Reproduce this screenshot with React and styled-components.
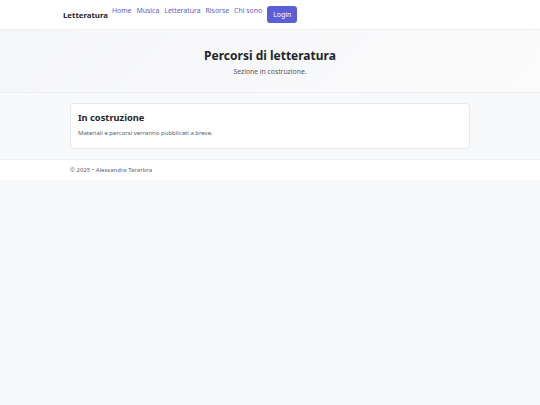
import React from 'react';
import styled, { createGlobalStyle } from 'styled-components';

const GlobalStyle = createGlobalStyle`
  html, body {
    margin: 0;
    padding: 0;
    background: #f8f9fa;
    font-family: "Noto Sans", "Open Sans", sans-serif;
    color: #212529;
  }
`;

const Header = styled.header`
  background: #fff;
  border-bottom: 1px solid #eceef1;
  height: 29px;
`;

const HeaderInner = styled.div`
  display: flex;
  align-items: flex-start;
  gap: 4px;
  padding: 0 63px;
`;

const Brand = styled.a`
  font-weight: 700;
  font-size: 7.8px;
  color: #212529;
  text-decoration: none;
  margin-top: 10px;
`;

const NavList = styled.nav`
  display: flex;
  align-items: flex-start;
  gap: 5px;
  margin-top: 6px;
`;

const NavLink = styled.a`
  font-size: 6.9px;
  color: #5b5fc7;
  text-decoration: none;
  line-height: 10px;
`;

const LoginButton = styled.button`
  font-family: inherit;
  font-size: 6.9px;
  color: #fff;
  background: #5b5fd6;
  border: none;
  border-radius: 3px;
  height: 17px;
  padding: 0 6px;
`;

const Hero = styled.section`
  background: linear-gradient(135deg, #f5f6f8 0%, #fbfbfc 100%);
  border-bottom: 1px solid #eceef1;
  height: 63px;
  display: flex;
  flex-direction: column;
  align-items: center;
  padding-top: 17px;
  box-sizing: border-box;
`;

const HeroTitle = styled.h1`
  margin: 0;
  font-size: 12px;
  font-weight: 700;
  color: #212529;
`;

const HeroSub = styled.p`
  margin: 3px 0 0;
  font-size: 6.8px;
  color: #4f555d;
`;

const Main = styled.main`
  padding: 10px 70px 10px;
`;

const Card = styled.div`
  background: #fff;
  border: 1px solid #e6e8eb;
  border-radius: 4px;
  padding: 7px 7px 11px;
`;

const CardTitle = styled.h2`
  margin: 0;
  font-size: 9.3px;
  font-weight: 700;
  color: #212529;
`;

const CardText = styled.p`
  margin: 5px 0 0;
  font-size: 6px;
  color: #555b63;
`;

const Footer = styled.footer`
  background: #fff;
  border-top: 1px solid #f0f1f3;
  height: 20px;
  display: flex;
  align-items: center;
  padding: 0 70px;
  font-size: 6px;
  color: #5f656d;
`;

const App = () => (
  <>
    <GlobalStyle />
    <Header>
      <HeaderInner>
        <Brand href="#">Letteratura</Brand>
        <NavList>
          <NavLink href="#">Home</NavLink>
          <NavLink href="#">Musica</NavLink>
          <NavLink href="#">Letteratura</NavLink>
          <NavLink href="#">Risorse</NavLink>
          <NavLink href="#">Chi sono</NavLink>
          <LoginButton>Login</LoginButton>
        </NavList>
      </HeaderInner>
    </Header>
    <Hero>
      <HeroTitle>Percorsi di letteratura</HeroTitle>
      <HeroSub>Sezione in costruzione.</HeroSub>
    </Hero>
    <Main>
      <Card>
        <CardTitle>In costruzione</CardTitle>
        <CardText>Materiali e percorsi verranno pubblicati a breve.</CardText>
      </Card>
    </Main>
    <Footer>© 2025 • Alessandra Tararbra</Footer>
  </>
);

export default App;
